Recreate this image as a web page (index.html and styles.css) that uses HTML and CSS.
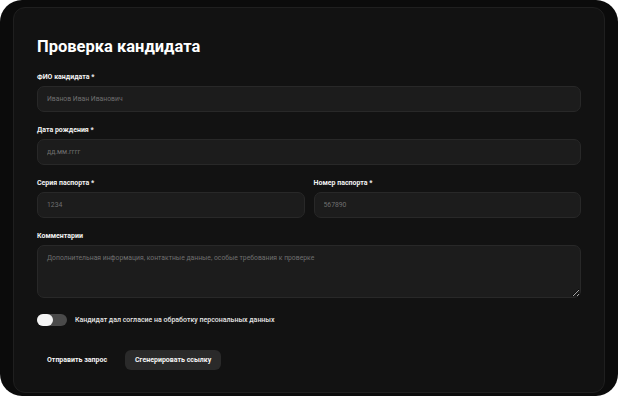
FILE: index.html
```html
<!DOCTYPE html>
<html lang="ru">
<head>
  <meta charset="UTF-8">
  <title>Проверка кандидата</title>
  <link rel="stylesheet" href="styles.css">
</head>
<body>
  <div class="frame">
    <form class="card">
      <h1 class="title">Проверка кандидата</h1>

      <div class="field">
        <label class="label" for="fio">ФИО кандидата *</label>
        <input class="input" id="fio" type="text" placeholder="Иванов Иван Иванович">
      </div>

      <div class="field">
        <label class="label" for="birth">Дата рождения *</label>
        <input class="input" id="birth" type="text" placeholder="дд.мм.гггг">
      </div>

      <div class="row">
        <div class="field">
          <label class="label" for="series">Серия паспорта *</label>
          <input class="input" id="series" type="text" placeholder="1234">
        </div>
        <div class="field">
          <label class="label" for="number">Номер паспорта *</label>
          <input class="input" id="number" type="text" placeholder="567890">
        </div>
      </div>

      <div class="field">
        <label class="label" for="comment">Комментарии</label>
        <textarea class="input textarea" id="comment" placeholder="Дополнительная информация, контактные данные, особые требования к проверке"></textarea>
      </div>

      <label class="consent">
        <span class="switch"><span class="knob"></span></span>
        <span>Кандидат дал согласие на обработку персональных данных</span>
      </label>

      <div class="actions">
        <button type="button" class="btn ghost">Отправить запрос</button>
        <button type="button" class="btn">Сгенерировать ссылку</button>
      </div>
    </form>
  </div>
</body>
</html>
```

FILE: styles.css
```css
* {
  box-sizing: border-box;
}

body {
  margin: 0;
  background: #fff;
  font-family: Roboto, 'Noto Sans', sans-serif;
}

.frame {
  width: 618px;
  height: 396px;
  background: #0b0b0b;
  border-radius: 22px;
  padding: 7px 13px 0 13px;
}

.card {
  height: 386px;
  background: #121212;
  border: 1px solid #1f1f1f;
  border-radius: 12px;
  padding: 29px 23px 0 23px;
  display: flex;
  flex-direction: column;
  gap: 13px;
}

.title {
  margin: 0 0 2px 0;
  color: #fff;
  font-size: 16.5px;
  font-weight: 700;
  line-height: 20px;
}

.field {
  display: flex;
  flex-direction: column;
  gap: 4px;
}

.row .field {
  flex: 1;
}

.label {
  color: #f2f2f2;
  font-size: 7px;
  font-weight: 700;
  line-height: 10px;
}

.input {
  height: 26px;
  width: 100%;
  background: #1c1c1c;
  border: 1px solid #282828;
  border-radius: 7px;
  padding: 0 9px;
  color: #ddd;
  font-family: inherit;
  font-size: 6.8px;
  outline: none;
}

.input::placeholder {
  color: #6f6f6f;
}

.textarea {
  height: 53px;
  padding: 8px 9px;
  resize: vertical;
  color-scheme: dark;
}

.row {
  display: flex;
  gap: 9px;
}

.consent {
  margin-top: 3px;
  display: flex;
  align-items: center;
  gap: 8px;
  color: #e6e6e6;
  font-size: 7px;
  font-weight: 500;
}

.switch {
  width: 30px;
  height: 12px;
  border-radius: 6px;
  background: #4a4a4a;
  display: flex;
}

.knob {
  width: 16px;
  height: 12px;
  border-radius: 6px;
  background: #f4f4f4;
}

.actions {
  margin-top: 11px;
  display: flex;
  gap: 8px;
}

.btn {
  height: 20px;
  padding: 0 10px;
  border: none;
  border-radius: 6px;
  background: #2a2a2a;
  color: #f5f5f5;
  font-family: inherit;
  font-size: 7px;
  font-weight: 700;
  cursor: pointer;
}

.btn.ghost {
  background: none;
}
```
